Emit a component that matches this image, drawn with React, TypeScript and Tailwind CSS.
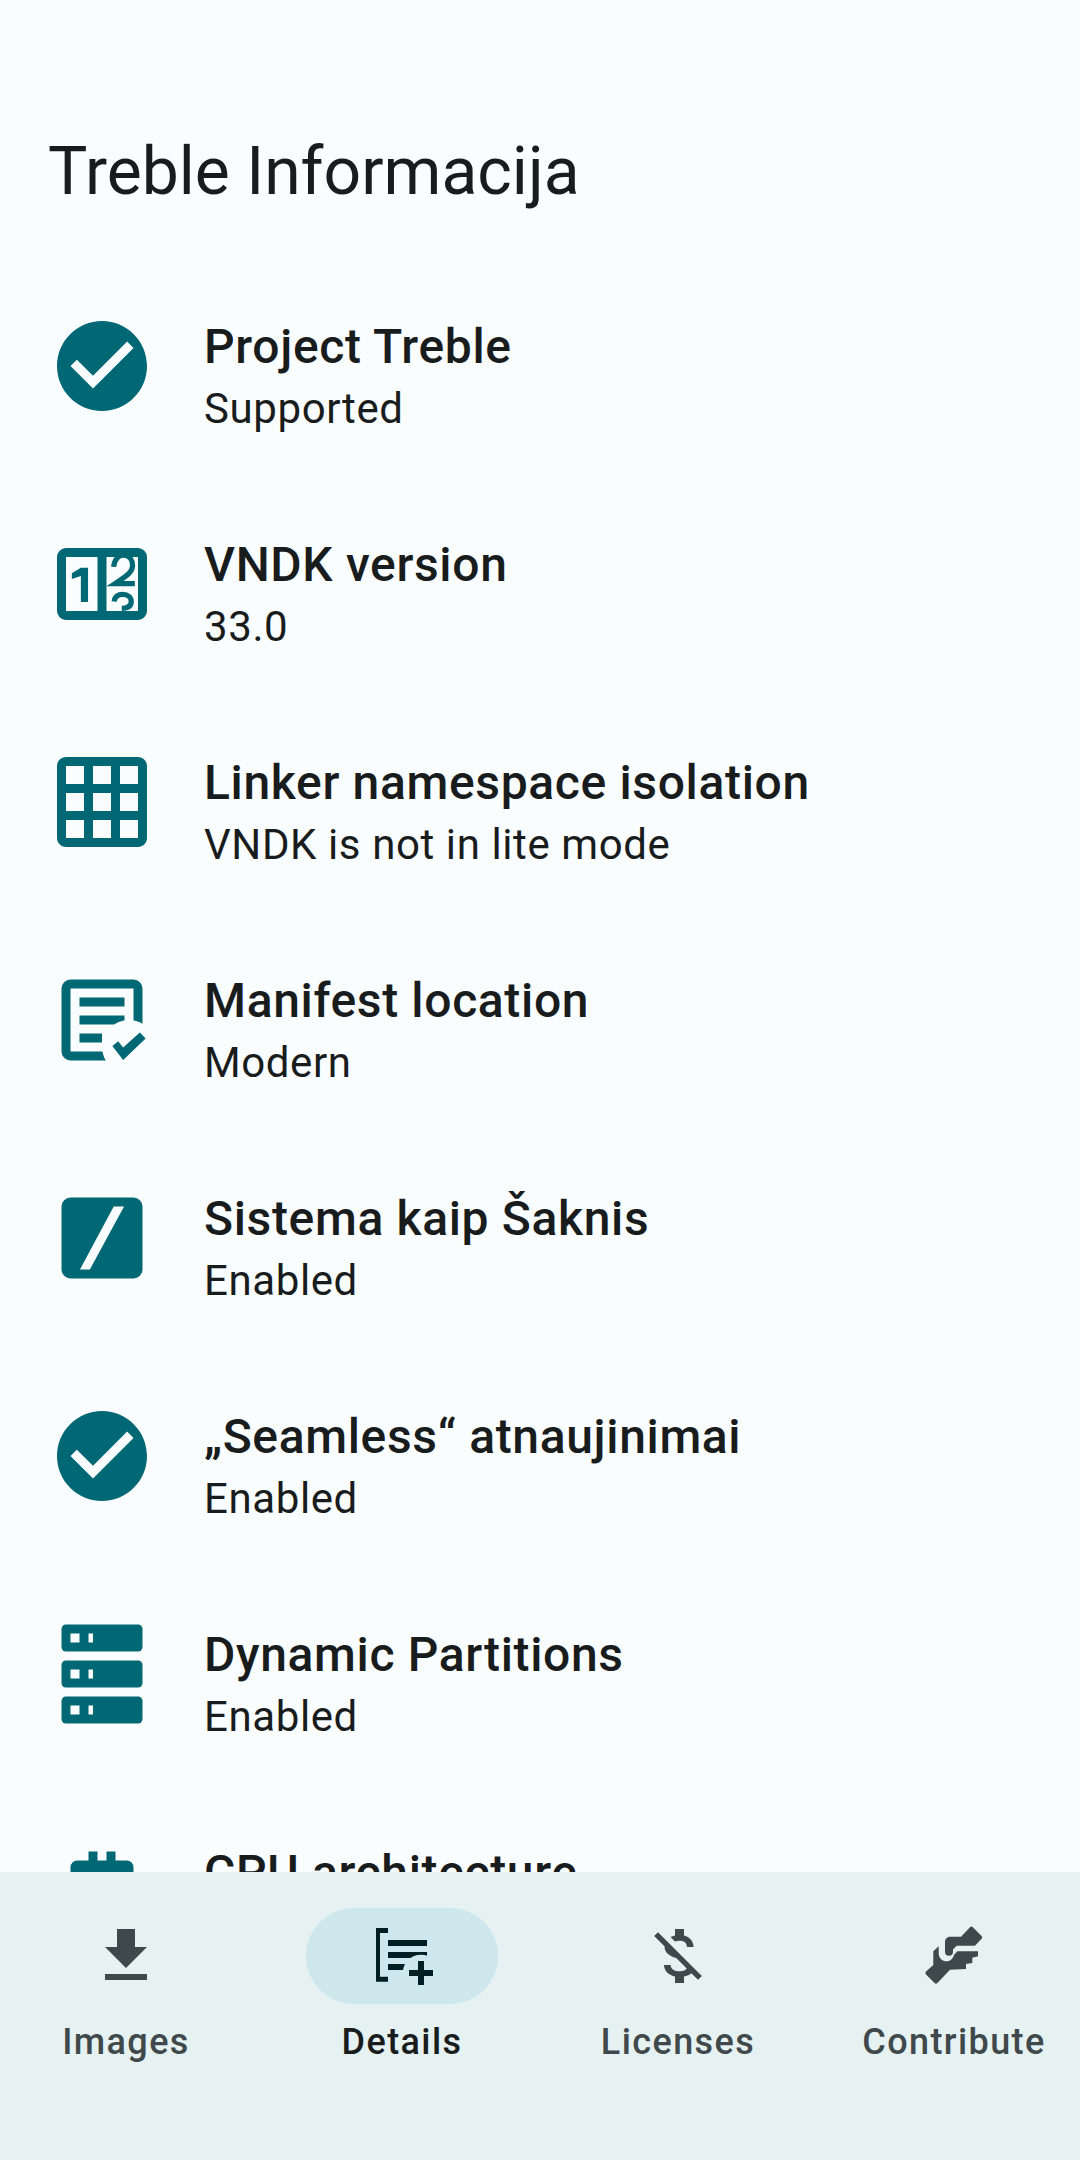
import React from 'react';

const TEAL = '#006874';
const PAGE_BG = '#fafdfe';
const PILL_BG = '#cde7ec';

type IconProps = { className?: string };

const CheckCircleIcon = ({ className }: IconProps) => (
  <svg viewBox="0 0 24 24" className={className} fill={TEAL}>
    <path d="M12 2C6.48 2 2 6.48 2 12s4.48 10 10 10 10-4.48 10-10S17.52 2 12 2zm-2 15l-5-5 1.41-1.41L10 14.17l7.59-7.59L19 8l-9 9z" />
  </svg>
);

const VndkIcon = ({ className }: IconProps) => (
  <svg viewBox="0 0 24 24" className={className} fill={TEAL}>
    <defs>
      <clipPath id="vndk-right">
        <rect x="13" y="6" width="7" height="12" />
      </clipPath>
    </defs>
    <path fillRule="evenodd" d="M4 4h16a2 2 0 0 1 2 2v12a2 2 0 0 1-2 2H4a2 2 0 0 1-2-2V6a2 2 0 0 1 2-2zm0 2v12h7V6H4zm9 0v12h7V6h-7z" />
    <path d="M8.9 8.4V16H7.3V10.2L5.3 10.9V9.6L7.3 8.4z" />
    <g clipPath="url(#vndk-right)" fill="none" stroke={TEAL} strokeWidth="1.15">
      <path d="M14.6 8.2C14.7 6.6 15.7 5.6 16.7 5.6C18 5.6 18.8 6.6 18.8 7.9C18.8 9.2 17.8 10 14.9 11.9H19.3" />
      <path d="M14.7 15.9C14.8 14.8 15.6 14.3 16.6 14.3C17.8 14.3 18.5 15 18.5 15.9C18.5 16.9 17.7 17.4 16.4 17.4" />
    </g>
  </svg>
);

const GridIcon = ({ className }: IconProps) => (
  <svg viewBox="0 0 24 24" className={className} fill={TEAL}>
    <path d="M20 2H4c-1.1 0-2 .9-2 2v16c0 1.1.9 2 2 2h16c1.1 0 2-.9 2-2V4c0-1.1-.9-2-2-2zM8 20H4v-4h4v4zm0-6H4v-4h4v4zm0-6H4V4h4v4zm6 12h-4v-4h4v4zm0-6h-4v-4h4v4zm0-6h-4V4h4v4zm6 12h-4v-4h4v4zm0-6h-4v-4h4v4zm0-6h-4V4h4v4z" />
  </svg>
);

const ManifestIcon = ({ className }: IconProps) => (
  <svg viewBox="0 0 24 24" className={className} fill={TEAL}>
    <path fillRule="evenodd" d="M5 3h14a2 2 0 0 1 2 2v14a2 2 0 0 1-2 2H5a2 2 0 0 1-2-2V5a2 2 0 0 1 2-2zm0 2v14h14V5H5z" />
    <rect x="7" y="7" width="10" height="2" />
    <rect x="7" y="11" width="10" height="2" />
    <rect x="7" y="15" width="5" height="2" />
    <circle cx="18" cy="18" r="6" fill={PAGE_BG} />
    <path d="M14.3 17.8L15.6 16.7L16.7 18.1L20.4 14.8L21.7 16.1L16.7 20.9z" />
  </svg>
);

const SlashIcon = ({ className }: IconProps) => (
  <svg viewBox="0 0 24 24" className={className} fill={TEAL}>
    <path fillRule="evenodd" d="M5 3h14a2 2 0 0 1 2 2v14a2 2 0 0 1-2 2H5a2 2 0 0 1-2-2V5a2 2 0 0 1 2-2zm9.6 2L7.1 19h2.2l7.6-14h-2.3z" />
  </svg>
);

const PartitionsIcon = ({ className }: IconProps) => (
  <svg viewBox="0 0 24 24" className={className} fill={TEAL}>
    {[1, 9, 17].map(y => (
      <g key={y}>
        <rect x="3" y={y} width="18" height="6" rx="1" />
        <rect x="5" y={y + 2} width="2" height="2" fill={PAGE_BG} />
        <rect x="9" y={y + 2} width="1" height="2" fill={PAGE_BG} />
      </g>
    ))}
  </svg>
);

const CpuIcon = ({ className }: IconProps) => (
  <svg viewBox="0 0 24 24" className={className} fill={TEAL}>
    <rect x="9" y="3" width="2" height="3" />
    <rect x="13" y="3" width="2" height="3" />
    <rect x="5" y="5" width="14" height="14" rx="1.5" />
  </svg>
);

const DownloadIcon = ({ className }: IconProps) => (
  <svg viewBox="0 0 24 24" className={className} fill="#3f484a">
    <path d="M19 9h-4V3H9v6H5l7 7 7-7zM5 18v2h14v-2H5z" />
  </svg>
);

const DetailsIcon = ({ className }: IconProps) => (
  <svg viewBox="0 0 72 72" className={className} fill="#001f25">
    <path d="M10 8H22V13H14V56.7H22V61.7H10z" />
    <rect x="22" y="20" width="39" height="6" />
    <rect x="22" y="32" width="39" height="6" />
    <rect x="22" y="44" width="17" height="6" />
    <circle cx="55" cy="53" r="18.3" fill={PILL_BG} />
    <path d="M52 41h6v9h9v6h-9v9h-6v-9h-9v-6h9z" />
  </svg>
);

const MoneyOffIcon = ({ className }: IconProps) => (
  <svg viewBox="0 0 24 24" className={className} fill="#3f484a">
    <path d="M12.5 6.9c1.78 0 2.44.85 2.5 2.1h2.21c-.07-1.72-1.12-3.3-3.21-3.81V3h-3v2.16c-.53.12-1.03.3-1.48.54l1.47 1.47c.41-.17.91-.27 1.51-.27zM5.33 4.06L4.06 5.33 7.5 8.77c0 2.08 1.56 3.22 3.91 3.91l3.51 3.51c-.34.49-1.05.91-2.42.91-2.06 0-2.87-.92-2.98-2.1h-2.2c.12 2.19 1.76 3.42 3.68 3.83V21h3v-2.15c.96-.18 1.82-.55 2.45-1.12l2.22 2.22 1.27-1.27L5.33 4.06z" />
  </svg>
);

const HandshakeIcon = ({ className }: IconProps) => (
  <svg viewBox="0 0 72 72" className={className} fill="#3f484a">
    <path d="M52 7.2a2 2 0 0 1 2.8 0L63.6 16a2 2 0 0 1 0 2.8L57 25.7H38.7L35 29.5V31.7A3.6 3.6 0 0 1 27 31.7V22.3C27 19 29 16.7 32 16.7H43z" />
    <path d="M15.3 31.3L20.7 26.3V33C20.7 38 24 41.3 28.7 41.3C33 41.3 35 38 36 35L39.3 31.3H60V36.3L54.3 37.7V43L48 44V49L32 49.7L19.4 63a2 2 0 0 1-2.8 0L8 54.4a2 2 0 0 1 0-2.8L15.3 45z" />
  </svg>
);

const ROWS = [
  { Icon: CheckCircleIcon, title: 'Project Treble', value: 'Supported' },
  { Icon: VndkIcon, title: 'VNDK version', value: '33.0' },
  { Icon: GridIcon, title: 'Linker namespace isolation', value: 'VNDK is not in lite mode' },
  { Icon: ManifestIcon, title: 'Manifest location', value: 'Modern' },
  { Icon: SlashIcon, title: 'Sistema kaip Šaknis', value: 'Enabled' },
  { Icon: CheckCircleIcon, title: '„Seamless“ atnaujinimai', value: 'Enabled' },
  { Icon: PartitionsIcon, title: 'Dynamic Partitions', value: 'Enabled' },
  // value sits below the nav bar in the screenshot, so it can't be read
  { Icon: CpuIcon, title: 'CPU architecture', value: '\u00a0' },
];

const TABS = [
  { Icon: DownloadIcon, label: 'Images', active: false },
  { Icon: DetailsIcon, label: 'Details', active: true },
  { Icon: MoneyOffIcon, label: 'Licenses', active: false },
  { Icon: HandshakeIcon, label: 'Contribute', active: false },
];

export default function App() {
  return (
    <div className="h-[2160px] w-[1080px] flex flex-col overflow-hidden bg-[#fafdfe] text-[#191c1d] font-['Roboto',sans-serif]">
      <main className="flex-1 overflow-hidden">
        <h1 className="pt-[130px] pb-[43px] px-12 text-[66px] leading-[84px] font-normal">Treble Informacija</h1>

        {ROWS.map(({ Icon, title, value }) => (
          <div key={title} className="h-[218px] flex items-center gap-12 px-12">
            <Icon className="w-[108px] h-[108px] shrink-0" />
            <div className="flex flex-col pt-[21px]">
              <span className="text-[48px] leading-[64px] font-medium tracking-[0.65px]">{title}</span>
              <span className="text-[42px] leading-[60px] tracking-[0.6px]">{value}</span>
            </div>
          </div>
        ))}
      </main>

      <nav className="h-[288px] shrink-0 bg-[#e6f1f2] grid grid-cols-4 gap-6 pt-9 items-start">
        {TABS.map(({ Icon, label, active }) => (
          <div key={label} className="flex flex-col items-center">
            <div className={`w-[192px] h-[96px] rounded-full flex items-center justify-center ${active ? 'bg-[#cde7ec]' : ''}`}>
              <Icon className="w-[72px] h-[72px]" />
            </div>
            <span className={`mt-[14px] text-[36px] leading-[48px] font-medium tracking-[1.4px] ${active ? 'text-[#191c1d]' : 'text-[#3f484a]'}`}>
              {label}
            </span>
          </div>
        ))}
      </nav>
    </div>
  );
}
